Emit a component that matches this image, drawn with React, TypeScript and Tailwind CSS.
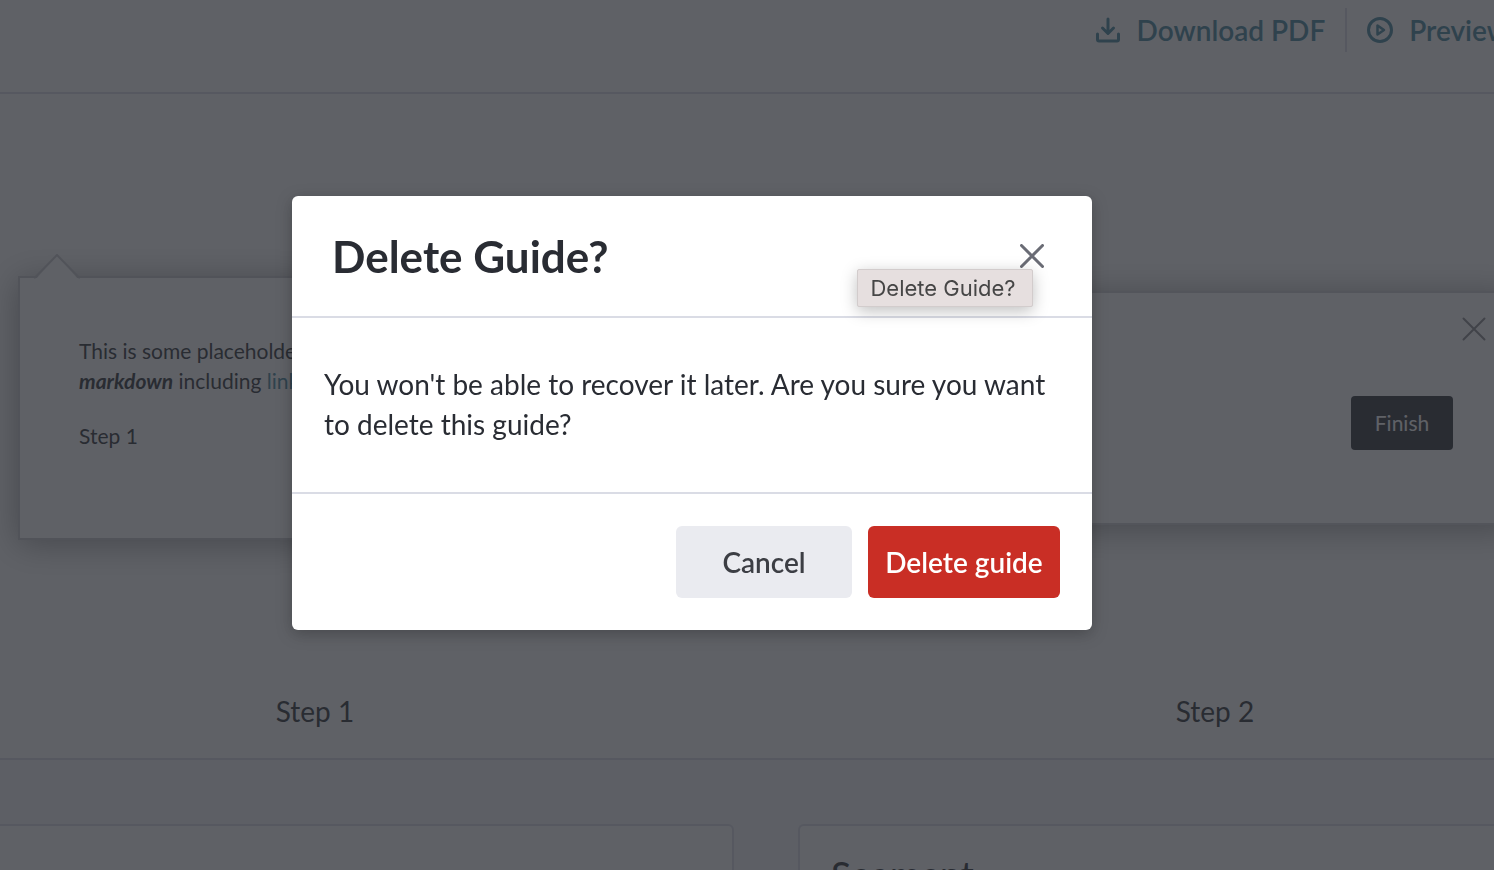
import type { ReactNode } from 'react'

interface GuideStepProps {
  label: string
  children: ReactNode
}

function DownloadIcon() {
  return (
    <svg width="26" height="26" viewBox="0 0 26 26" fill="none" stroke="currentColor" strokeWidth="3" strokeLinecap="round" strokeLinejoin="round">
      <path d="M13 2v14M7.500 11l5.500 5.500 5.500-5.500M2.500 17v5.500a1.500 1.500 0 0 0 1.500 1.500h18a1.500 1.500 0 0 0 1.500-1.500V17" />
    </svg>
  )
}

function PreviewIcon() {
  return (
    <svg width="26" height="26" viewBox="0 0 26 26" fill="none" stroke="currentColor" strokeWidth="3" strokeLinejoin="round">
      <circle cx="13" cy="13" r="11.500" />
      <path d="M10.500 8.500v9l6.500-4.500z" strokeWidth="2.500" />
    </svg>
  )
}

function CloseIcon({ strokeWidth }: { strokeWidth: number }) {
  return (
    <svg width="24" height="24" viewBox="0 0 24 24" fill="none" stroke="currentColor" strokeWidth={strokeWidth} strokeLinecap="round">
      <path d="M1.500 1.500l21 21M22.500 1.500l-21 21" />
    </svg>
  )
}

function Toolbar() {
  return (
    <header className="flex h-[94px] items-start justify-end overflow-hidden border-b-2 border-[#dadce5] pt-2">
      <div className="-mr-[15px] flex h-11 shrink-0 items-center text-[28px] font-semibold text-[#40839a]">
        <button type="button" className="flex items-center gap-4 pr-5">
          <DownloadIcon />
          Download PDF
        </button>
        <span className="h-11 w-0.5 bg-[#dadce5]" />
        <button type="button" className="flex items-center gap-4 pl-5">
          <PreviewIcon />
          Preview
        </button>
      </div>
    </header>
  )
}

function GuideStep({ label, children }: GuideStepProps) {
  return (
    <section className="flex w-[900px] shrink-0 flex-col items-center">
      <div className="flex h-[594px] items-center pt-[34px]">{children}</div>
      <h2 className="h-[46px] text-[28px] leading-[46px]">{label}</h2>
    </section>
  )
}

function TooltipCard() {
  return (
    <div className="relative h-[264px] w-[594px] border-2 border-[#c8c8cc] bg-white px-[59px] pt-[58px] text-[21px] leading-[30px] shadow-[0_4px_32px_rgba(0,0,0,0.4)]">
      <svg className="absolute -top-6 left-3.5" width="46" height="26" viewBox="0 0 46 26">
        <path d="M1 26L23 2l22 24z" fill="#fff" />
        <path d="M0 23.500h1L23 1l22 22.500h1" fill="none" stroke="#c8c8cc" strokeWidth="2" />
      </svg>
      <p>
        This is some placeholder text.
        <br />
        <strong><em>markdown</em></strong> including{' '}
        <a href="#links" className="text-[#40839a]">links</a>
      </p>
      <p className="mt-[25px]">Step 1</p>
    </div>
  )
}

function FinishCard() {
  return (
    <div className="flex h-[234px] w-[596px] flex-col items-end border-2 border-[#d0d0d4] bg-white pt-6 shadow-[0_4px_32px_rgba(0,0,0,0.4)]">
      <button type="button" aria-label="Close step" className="mr-[25px] text-[#86878c]">
        <CloseIcon strokeWidth={2} />
      </button>
      <button type="button" className="mt-[55px] mr-[58px] h-[54px] w-[102px] rounded bg-[#292c33] text-[21px] text-white">
        Finish
      </button>
    </div>
  )
}

function DeleteGuideDialog() {
  return (
    <div className="fixed inset-0 flex items-start justify-center bg-[#292c33]/75 pt-[196px] pr-[110px]">
      <div
        role="dialog"
        aria-modal="true"
        aria-labelledby="dialog-title"
        className="w-full max-w-[800px] rounded-md bg-white shadow-[0_4px_16px_rgba(0,0,0,0.25)]"
      >
        <div className="relative flex h-[122px] items-center justify-between border-b-2 border-[#dadce5] pr-12 pl-10">
          <h1 id="dialog-title" className="text-[44px] font-bold">Delete Guide?</h1>
          <button type="button" aria-label="Close" className="text-[#6a6c75]">
            <CloseIcon strokeWidth={3} />
          </button>
          <div
            role="tooltip"
            className="absolute top-[73px] right-[59px] flex h-[38px] w-44 items-center justify-center rounded-xs border border-[#d2cccc] bg-[#e6dfdf] pr-1 font-[Inter,sans-serif] text-[22px] text-[#464646] shadow-[0_4px_16px_rgba(0,0,0,0.25)]"
          >
            Delete Guide?
          </div>
        </div>
        <p className="px-8 pt-[46px] pb-12 text-[28px] leading-10">
          You won't be able to recover it later. Are you sure you want to delete this guide?
        </p>
        <div className="flex justify-end gap-4 border-t-2 border-[#dadce5] p-8 text-[28px] font-semibold">
          <button type="button" className="h-[72px] w-44 rounded-md bg-[#eaebf0] text-[#3c3e44]">
            Cancel
          </button>
          <button type="button" className="h-[72px] w-48 rounded-md bg-[#c92e25] whitespace-nowrap text-white">
            Delete guide
          </button>
        </div>
      </div>
    </div>
  )
}

export default function App() {
  return (
    <div className="h-screen overflow-hidden bg-white font-[Lato,sans-serif] text-[#292c33]">
      <Toolbar />
      <main>
        <div className="-ml-[135px] flex overflow-hidden pb-6">
          <GuideStep label="Step 1">
            <TooltipCard />
          </GuideStep>
          <GuideStep label="Step 2">
            <FinishCard />
          </GuideStep>
        </div>
        <div className="grid grid-cols-2 gap-16 border-t-2 border-[#dadce5] bg-[#f6f6f9] pt-16">
          <div className="-mr-[19px] h-60 rounded-r-md border-2 border-l-0 border-[#dadce5] bg-white" />
          <div className="ml-[19px] h-60 rounded-l-md border-2 border-r-0 border-[#dadce5] bg-white px-[31px] pt-5">
            <h2 className="text-[37px] font-medium">Segment</h2>
          </div>
        </div>
      </main>
      <DeleteGuideDialog />
    </div>
  )
}
